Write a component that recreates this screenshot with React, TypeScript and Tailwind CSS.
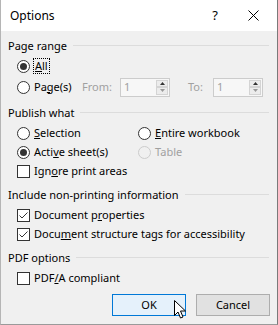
import React from 'react'

const font = { fontFamily: '"Segoe UI", "Noto Sans", "Open Sans", sans-serif' }

function Radio({ checked, disabled }: { checked?: boolean; disabled?: boolean }) {
  return (
    <span
      className={`w-[13px] h-[13px] rounded-full border flex items-center justify-center shrink-0 ${
        disabled ? 'border-[#cccccc] bg-[#f0f0f0]' : 'border-[#333333] bg-white'
      }`}
    >
      {checked && <span className="w-[7px] h-[7px] rounded-full bg-[#333333]" />}
    </span>
  )
}

function Check({ checked }: { checked?: boolean }) {
  return (
    <span className="w-[13px] h-[13px] border border-[#333333] bg-white flex items-center justify-center shrink-0">
      {checked && (
        <svg width="11" height="11" viewBox="0 0 11 11">
          <path d="M1.5 5.5 L4 8 L9.5 2.5" fill="none" stroke="#333333" strokeWidth="1" />
        </svg>
      )}
    </span>
  )
}

function Header({ children }: { children: React.ReactNode }) {
  return (
    <div className="h-[16px] flex items-center pl-[7px] pr-[8px]">
      <span className="leading-none">{children}</span>
      <span className="flex-1 h-px bg-[#dcdcdc] ml-[6px]" />
    </div>
  )
}

function Spin({ label, labelWidth }: { label: string; labelWidth: string }) {
  return (
    <div className="flex items-center">
      <span className={`text-[#a0a0a0] ${labelWidth}`}>{label}</span>
      <div className="h-[19px] border border-[#cccccc] bg-[#f7f7f7] flex items-stretch">
        <span className="w-[35px] pl-[3px] text-[#a0a0a0] flex items-center">1</span>
        <div className="w-[13px] flex flex-col justify-between py-[1px] pr-[1px]">
          <span className="h-[8px] bg-[#ececec] border border-[#d4d4d4] flex items-center justify-center">
            <svg width="5" height="3" viewBox="0 0 5 3"><path d="M0 3 L2.5 0 L5 3Z" fill="#333" /></svg>
          </span>
          <span className="h-[8px] bg-[#ececec] border border-[#d4d4d4] flex items-center justify-center">
            <svg width="5" height="3" viewBox="0 0 5 3"><path d="M0 0 L2.5 3 L5 0Z" fill="#999" /></svg>
          </span>
        </div>
      </div>
    </div>
  )
}

export default function App() {
  return (
    <div className="w-[278px] h-[325px] bg-[#f0f0f0] text-[11px] text-black border-r border-r-[#7a7a7a] border-l border-l-[#b5b5b5] border-b border-b-[#9a9a9a] flex flex-col" style={font}>
      {/* Title */}
      <div className="h-[31px] bg-white flex items-center pl-[9px] pr-[18px] text-[12px]">
        <span className="flex-1">Options</span>
        <span className="mr-[30px] text-[13px]">?</span>
        <svg width="11" height="11" viewBox="0 0 11 11">
          <path d="M0.5 0.5 L10.5 10.5 M10.5 0.5 L0.5 10.5" stroke="#000" strokeWidth="1" />
        </svg>
      </div>

      <div className="mt-[6px]">
        <Header>Page range</Header>
      </div>
      <div className="h-[20px] mt-[3px] flex items-center pl-[16px] gap-[4px]">
        <Radio checked />
        <span className="outline-1 outline-dotted outline-black leading-[14px] px-[1px]"><u>A</u>ll</span>
      </div>
      <div className="h-[22px] flex items-center pl-[16px]">
        <Radio />
        <span className="ml-[4px] w-[48px]">Pa<u>g</u>e(s)</span>
        <Spin label="From:" labelWidth="w-[38px]" />
        <span className="w-[18px]" />
        <Spin label="To:" labelWidth="w-[25px]" />
      </div>

      <div className="mt-[6px]">
        <Header>Publish what</Header>
      </div>
      <div className="h-[20px] mt-[3px] flex items-center pl-[16px]">
        <div className="w-[121px] flex items-center gap-[4px]">
          <Radio />
          <span><u>S</u>election</span>
        </div>
        <div className="flex items-center gap-[4px]">
          <Radio />
          <span><u>E</u>ntire workbook</span>
        </div>
      </div>
      <div className="h-[19px] flex items-center pl-[16px]">
        <div className="w-[121px] flex items-center gap-[4px]">
          <Radio checked />
          <span>Acti<u>v</u>e sheet(s)</span>
        </div>
        <div className="flex items-center gap-[4px]">
          <Radio disabled />
          <span className="text-[#a0a0a0]">Table</span>
        </div>
      </div>
      <div className="h-[19px] flex items-center pl-[16px] gap-[4px]">
        <Check />
        <span>Ign<u>o</u>re print areas</span>
      </div>

      <div className="mt-[5px]">
        <Header>Include non-printing information</Header>
      </div>
      <div className="h-[20px] mt-[3px] flex items-center pl-[16px] gap-[4px]">
        <Check checked />
        <span>Document p<u>r</u>operties</span>
      </div>
      <div className="h-[19px] flex items-center pl-[16px] gap-[4px]">
        <Check checked />
        <span>Docu<u>m</u>ent structure tags for accessibility</span>
      </div>

      <div className="mt-[5px]">
        <Header>PDF options</Header>
      </div>
      <div className="h-[20px] mt-[3px] flex items-center pl-[16px] gap-[4px]">
        <Check />
        <span>PDF<u>/</u>A compliant</span>
      </div>

      <div className="mt-[6px] flex justify-end gap-[10px] pr-[7px]">
        <div className="relative w-[74px] h-[22px] border border-[#0078d7] bg-[#e5f1fb] flex items-center justify-center">
          OK
          <svg className="absolute left-[61px] top-[5px]" width="13" height="20" viewBox="0 0 13 20">
            <path d="M0.5 0.5 L0.5 15.5 L4 12 L6.5 18 L9 17 L6.5 11 L11.5 11 Z" fill="#fff" stroke="#000" strokeWidth="1" strokeLinejoin="round" />
          </svg>
        </div>
        <div className="w-[74px] h-[22px] border border-[#adadad] bg-[#e1e1e1] flex items-center justify-center">
          Cancel
        </div>
      </div>
    </div>
  )
}
